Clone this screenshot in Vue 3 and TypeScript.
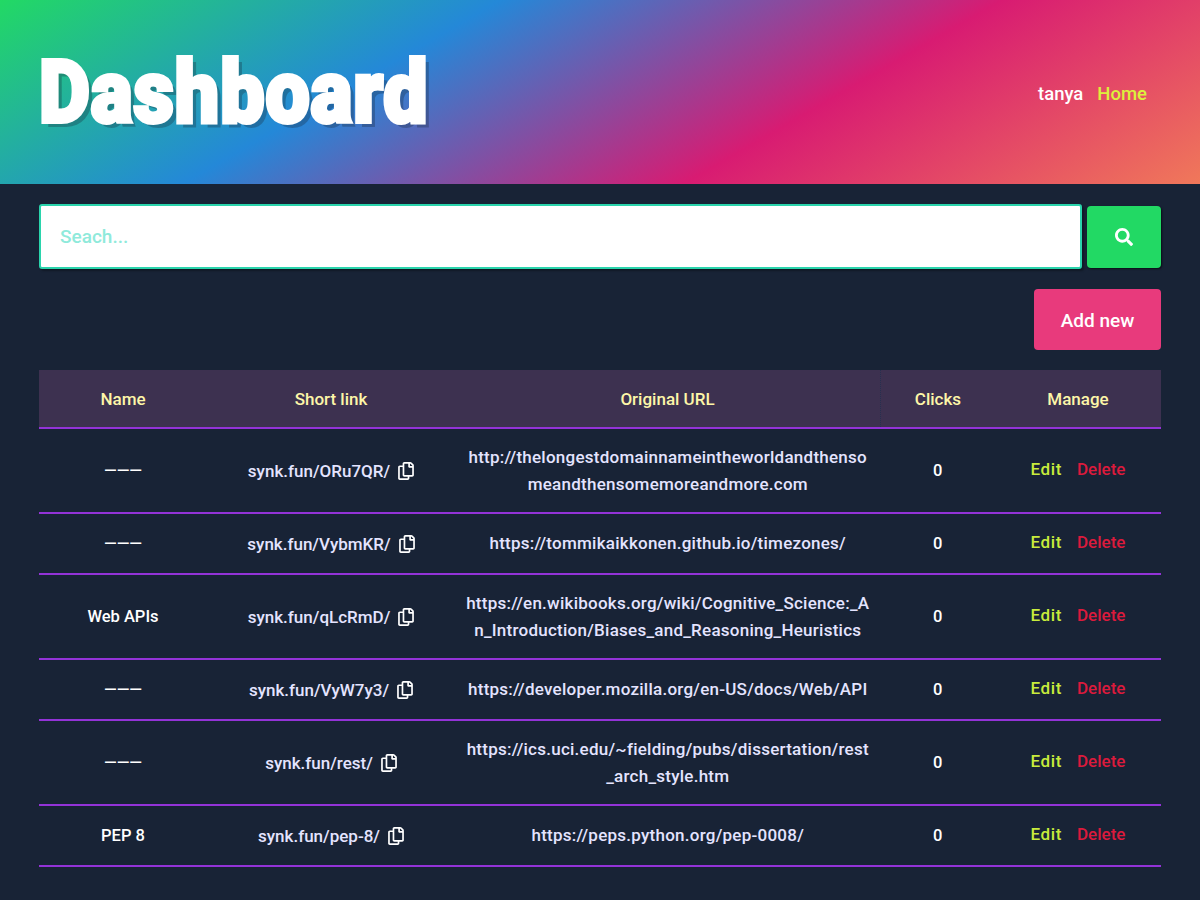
<template>
  <div class="dashboard">
    <header class="hero">
      <h1 class="hero__title">Dashboard</h1>
      <nav class="hero__nav">
        <span class="hero__user">tanya</span>
        <a class="hero__link" href="#">Home</a>
      </nav>
    </header>

    <main class="content">
      <form class="search" @submit.prevent>
        <input class="search__input" type="text" placeholder="Seach..." />
        <button class="search__button" type="submit" aria-label="Search">
          <svg class="search__icon" viewBox="0 0 512 512" fill="currentColor">
            <path d="M505 442.7L405.3 343c-4.5-4.5-10.6-7-17-7H372c27.6-35.3 44-79.7 44-128C416 93.1 322.9 0 208 0S0 93.1 0 208s93.1 208 208 208c48.3 0 92.7-16.4 128-44v16.3c0 6.4 2.5 12.5 7 17l99.7 99.7c9.4 9.4 24.6 9.4 33.9 0l28.3-28.3c9.4-9.4 9.4-24.6.1-34zM208 336c-70.7 0-128-57.2-128-128 0-70.7 57.2-128 128-128 70.7 0 128 57.2 128 128 0 70.7-57.2 128-128 128z" />
          </svg>
        </button>
      </form>

      <div class="actions">
        <button class="actions__add" type="button">Add new</button>
      </div>

      <table class="links">
        <thead>
          <tr>
            <th class="col-name">Name</th>
            <th class="col-short">Short link</th>
            <th class="col-url">Original URL</th>
            <th class="col-clicks">Clicks</th>
            <th class="col-manage">Manage</th>
          </tr>
        </thead>
        <tbody>
          <tr v-for="link in links" :key="link.short">
            <td class="cell-name">{{ link.name }}</td>
            <td class="cell-short">
              <span>{{ link.short }}</span>
              <svg class="copy-icon" viewBox="0 0 448 512" fill="currentColor">
                <path d="M433.941 65.941l-51.882-51.882A48 48 0 0 0 348.118 0H176c-26.51 0-48 21.49-48 48v48H48c-26.51 0-48 21.49-48 48v320c0 26.51 21.49 48 48 48h224c26.51 0 48-21.49 48-48v-48h80c26.51 0 48-21.49 48-48V99.882a48 48 0 0 0-14.059-33.941zM266 464H54a6 6 0 0 1-6-6V150a6 6 0 0 1 6-6h74v224c0 26.51 21.49 48 48 48h96v42a6 6 0 0 1-6 6zm128-96H182a6 6 0 0 1-6-6V54a6 6 0 0 1 6-6h106v88c0 13.255 10.745 24 24 24h88v202a6 6 0 0 1-6 6zm6-256h-64V48h9.632c1.591 0 3.117.632 4.243 1.757l48.368 48.368a6 6 0 0 1 1.757 4.243V112z" />
              </svg>
            </td>
            <td class="cell-url">{{ link.url }}</td>
            <td class="cell-clicks">{{ link.clicks }}</td>
            <td class="cell-manage">
              <a class="edit" href="#">Edit</a>
              <a class="delete" href="#">Delete</a>
            </td>
          </tr>
        </tbody>
      </table>
    </main>
  </div>
</template>

<script setup lang="ts">
interface ShortLink {
  name: string
  short: string
  url: string
  clicks: number
}

const links: ShortLink[] = [
  {
    name: '———',
    short: 'synk.fun/ORu7QR/',
    url: 'http://thelongestdomainnameintheworldandthenso\nmeandthensomemoreandmore.com',
    clicks: 0
  },
  {
    name: '———',
    short: 'synk.fun/VybmKR/',
    url: 'https://tommikaikkonen.github.io/timezones/',
    clicks: 0
  },
  {
    name: 'Web APIs',
    short: 'synk.fun/qLcRmD/',
    url: 'https://en.wikibooks.org/wiki/Cognitive_Science:_A\nn_Introduction/Biases_and_Reasoning_Heuristics',
    clicks: 0
  },
  {
    name: '———',
    short: 'synk.fun/VyW7y3/',
    url: 'https://developer.mozilla.org/en-US/docs/Web/API',
    clicks: 0
  },
  {
    name: '———',
    short: 'synk.fun/rest/',
    url: 'https://ics.uci.edu/~fielding/pubs/dissertation/rest\n_arch_style.htm',
    clicks: 0
  },
  {
    name: 'PEP 8',
    short: 'synk.fun/pep-8/',
    url: 'https://peps.python.org/pep-0008/',
    clicks: 0
  }
]
</script>

<style>
html,
body {
  background: #182336;
}
</style>

<style scoped>
.dashboard {
  min-height: 900px;
  background: #182336;
  font-family: Roboto, "Liberation Sans", sans-serif;
  font-weight: 500;
  font-size: 16.5px;
  color: #fff;
}

.hero {
  display: flex;
  align-items: center;
  justify-content: space-between;
  height: 184px;
  padding: 0 53px 0 39px;
  background: linear-gradient(150deg, #22d964 0%, #2488d8 33%, #d81b72 66%, #f0785a 100%);
}

.hero__title {
  margin: 0;
  font-family: Roboto, "Liberation Sans", sans-serif;
  font-size: 88px;
  font-weight: 900;
  line-height: 1;
  letter-spacing: 1px;
  color: #fff;
  -webkit-text-stroke: 4px #fff;
  text-shadow: 5.6px 5px 0 rgba(24, 35, 54, 0.3);
  transform: scaleX(0.895);
  transform-origin: left center;
}

.hero__nav {
  display: flex;
  gap: 14px;
  padding-top: 4px;
  font-size: 18.5px;
}

.hero__link {
  color: #dcf03c;
  text-decoration: none;
}

.content {
  padding: 20px 39px 0;
}

.search {
  display: flex;
  align-items: center;
  gap: 5px;
}

.search__input {
  flex: 1;
  height: 65px;
  box-sizing: border-box;
  padding: 0 19px;
  border: 2px solid #2ad4ac;
  border-radius: 3px;
  background: #fff;
  font: inherit;
  font-size: 19px;
  box-shadow: 2px 2px 2px rgba(0, 0, 0, 0.3);
  outline: none;
}

.search__input::placeholder {
  color: #8feadb;
  opacity: 1;
}

.search__button {
  display: flex;
  align-items: center;
  justify-content: center;
  width: 74px;
  height: 62px;
  padding: 0;
  border: 0;
  border-radius: 4px;
  background: #22d964;
  color: #fff;
  box-shadow: 1px 1px 2px rgba(0, 0, 0, 0.6);
}

.search__icon {
  width: 18px;
  height: 18px;
}

.actions {
  display: flex;
  justify-content: flex-end;
  margin-top: 20px;
}

.actions__add {
  width: 127px;
  height: 61px;
  padding: 2px 0 0;
  border: 0;
  border-radius: 4px;
  background: #e83a7c;
  color: #fff;
  font: inherit;
  font-size: 19px;
}

.links {
  width: 100%;
  margin-top: 20px;
  border-collapse: collapse;
  table-layout: fixed;
  text-align: center;
}

.links th {
  height: 56px;
  padding: 1px 0 0;
  background: #3d3150;
  border-bottom: 2px solid #9333d8;
  color: #fdf6a8;
  font-size: 17px;
  font-weight: 500;
}

.links td {
  padding: 14.5px 0;
  border-bottom: 2px solid #9333d8;
  line-height: 27px;
}

.col-name {
  width: 168px;
}

.col-short {
  width: 248px;
}

.col-url {
  width: 425px;
}

.col-clicks {
  width: 114px;
}

.links th.col-clicks {
  border-left: 1px dotted #26304f;
}

.links td.cell-short {
  line-height: 30px;
  font-size: 17px;
}

.cell-short,
.cell-url {
  color: #e4e4ff;
}

.cell-url {
  font-size: 17px;
  letter-spacing: 0.25px;
  white-space: pre-line;
}

.copy-icon {
  width: 16px;
  height: 18px;
  margin-left: 8px;
  vertical-align: -3px;
  color: #fff;
}

.links td.cell-manage {
  padding-bottom: 16px;
  font-size: 17px;
}

.cell-manage a {
  text-decoration: none;
}

.edit {
  letter-spacing: 0.6px;
  color: #c8ec3c;
}

.delete {
  margin-left: 15px;
  color: #dc1a3c;
}
</style>
